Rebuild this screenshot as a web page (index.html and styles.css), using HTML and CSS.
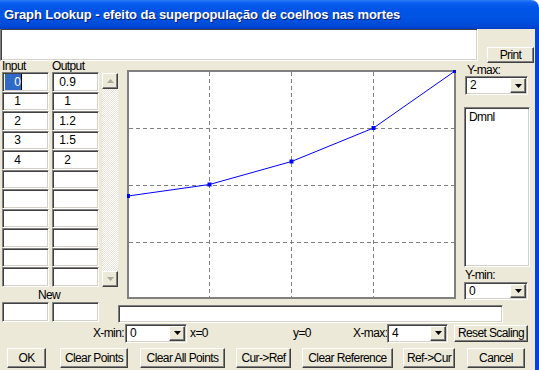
FILE: index.html
```html
<!DOCTYPE html>
<html lang="pt">
<head>
    <meta charset="UTF-8">
    <title>Graph Lookup</title>
    <link rel="stylesheet" href="styles.css">
</head>
<body>
    <div class="window">
        <div class="titlebar">Graph Lookup - efeito da superpopulação de coelhos nas mortes</div>
        <div class="client">
            <div class="top">
                <div class="memo sunken"></div>
                <button class="btn print">Print</button>
            </div>

            <div class="body">
                <div class="table">
                    <div class="heads"><span>Input</span><span>Output</span></div>
                    <div class="cells">
                        <div class="cell sunken in"><span class="sel">0</span></div><div class="cell sunken out">0.9</div>
                        <div class="cell sunken in">1</div><div class="cell sunken out">1</div>
                        <div class="cell sunken in">2</div><div class="cell sunken out">1.2</div>
                        <div class="cell sunken in">3</div><div class="cell sunken out">1.5</div>
                        <div class="cell sunken in">4</div><div class="cell sunken out">2</div>
                        <div class="cell sunken"></div><div class="cell sunken"></div>
                        <div class="cell sunken"></div><div class="cell sunken"></div>
                        <div class="cell sunken"></div><div class="cell sunken"></div>
                        <div class="cell sunken"></div><div class="cell sunken"></div>
                        <div class="cell sunken"></div><div class="cell sunken"></div>
                        <div class="cell sunken"></div><div class="cell sunken"></div>
                    </div>
                    <div class="newlabel">New</div>
                    <div class="cells newrow">
                        <div class="cell sunken"></div><div class="cell sunken"></div>
                    </div>
                </div>

                <div class="right">
                    <div class="mid">
                        <div class="scrollbar">
                            <div class="sbtn raised">
                                <svg width="7" height="4" viewBox="0 0 7 4"><path d="M3.5 0L7 4H0z" fill="#aca899"/></svg>
                            </div>
                            <div class="track"></div>
                            <div class="sbtn raised">
                                <svg width="7" height="4" viewBox="0 0 7 4"><path d="M0 0H7L3.5 4z" fill="#aca899"/></svg>
                            </div>
                        </div>

                        <div class="chart">
                            <svg width="329" height="229" viewBox="0 0 329 229">
                                <rect x="1" y="1" width="327" height="227" fill="#fff" stroke="#808080" stroke-width="2"/>
                                <path d="M82.5 2V227M164.5 2V227M246.5 2V227M2 58.5H327M2 115.5H327M2 172.5H327" stroke="#808080" stroke-dasharray="4 3" fill="none"/>
                                <polyline points="1,126 82.5,114.5 164.5,91.5 246.5,58 328,1" fill="none" stroke="#0000ff"/>
                                <g fill="#0000ff">
                                    <rect x="-1" y="124" width="4" height="4"/>
                                    <rect x="80.5" y="112.5" width="4" height="4"/>
                                    <rect x="162.5" y="89.5" width="4" height="4"/>
                                    <rect x="244.5" y="56" width="4" height="4"/>
                                    <rect x="326" y="-1" width="4" height="4"/>
                                </g>
                            </svg>
                        </div>

                        <div class="side">
                            <div class="lbl">Y-max:</div>
                            <div class="combo ymax sunken">
                                <span>2</span>
                                <span class="drop raised"><svg width="7" height="4" viewBox="0 0 7 4"><path d="M0 0H7L3.5 4z"/></svg></span>
                            </div>
                            <div class="units sunken">Dmnl</div>
                            <div class="lbl lbl-min">Y-min:</div>
                            <div class="combo ymin sunken">
                                <span>0</span>
                                <span class="drop raised"><svg width="7" height="4" viewBox="0 0 7 4"><path d="M0 0H7L3.5 4z"/></svg></span>
                            </div>
                        </div>
                    </div>
                    <div class="status sunken"></div>
                </div>
            </div>

            <div class="xrow">
                <span class="xlabel">X-min:</span>
                <div class="combo xmin sunken">
                    <span>0</span>
                    <span class="drop raised"><svg width="7" height="4" viewBox="0 0 7 4"><path d="M0 0H7L3.5 4z"/></svg></span>
                </div>
                <span class="xval">x=0</span>
                <span class="yval">y=0</span>
                <span class="xmaxlabel">X-max:</span>
                <div class="combo xmax sunken">
                    <span>4</span>
                    <span class="drop raised"><svg width="7" height="4" viewBox="0 0 7 4"><path d="M0 0H7L3.5 4z"/></svg></span>
                </div>
                <button class="btn reset">Reset Scaling</button>
            </div>

            <div class="btnrow">
                <button class="btn b-ok">OK</button>
                <button class="btn b-clear">Clear Points</button>
                <button class="btn b-clearall">Clear All Points</button>
                <button class="btn b-curref">Cur-&gt;Ref</button>
                <button class="btn b-clearref">Clear Reference</button>
                <button class="btn b-refcur">Ref-&gt;Cur</button>
                <button class="btn b-cancel">Cancel</button>
            </div>
        </div>
    </div>
</body>
</html>
```

FILE: styles.css
```css
html,
body {
    margin: 0;
}
body {
    background: #fff;
    color: #000;
    font-family: "Liberation Sans", Arial, sans-serif;
    font-size: 12px;
    letter-spacing: -0.6px;
    white-space: nowrap;
}
.window {
    width: 539px;
    height: 370px;
    display: flex;
    flex-direction: column;
    overflow: hidden;
}
.titlebar {
    flex: none;
    height: 29px;
    box-sizing: border-box;
    padding: 7px 0 0 4px;
    color: #fff;
    font: bold 13px "Liberation Sans", sans-serif;
    letter-spacing: -0.1px;
    text-shadow: 1px 1px #0a1c6a;
    border-top-right-radius: 8px;
    background: linear-gradient(#2b7cf6 0, #0a5ff0 3px, #0055e8 8px, #0054e3 60%, #0049d6 90%, #003cc2 100%);
}
.client {
    flex: 1;
    display: flex;
    flex-direction: column;
    background: #ece9d8;
    border-right: 4px solid #0841d8;
}

/* sunken / raised frames */
.sunken {
    box-sizing: border-box;
    background: #fff;
    border: 1px solid;
    border-color: #808080 #fff #fff #808080;
    box-shadow: inset 1px 1px #404040, inset -1px -1px #d4d0c8;
}
.raised {
    box-sizing: border-box;
    background: #ece9d8;
    border: 1px solid;
    border-color: #fff #404040 #404040 #fff;
    box-shadow: inset -1px -1px #808080;
}
.btn {
    box-sizing: border-box;
    height: 20px;
    padding: 0;
    font: inherit;
    letter-spacing: inherit;
    color: #000;
    background: #ece9d8;
    border: 1px solid;
    border-color: #fff #404040 #404040 #fff;
    box-shadow: inset -1px -1px #808080;
}

.top {
    display: flex;
    height: 32px;
}
.memo {
    width: 478px;
    height: 32px;
    border-top: 0;
}
.print {
    width: 47px;
    height: 16px;
    margin-left: 9px;
    align-self: flex-end;
    margin-bottom: -2px;
    position: relative;
    line-height: 13px;
}

.body {
    display: flex;
    height: 262px;
}

/* left table */
.table {
    width: 100px;
    padding-left: 2px;
    box-sizing: border-box;
}
.heads {
    display: grid;
    grid-template-columns: 47px 47px;
    column-gap: 3px;
    height: 11px;
    line-height: 11px;
}
.cells {
    display: grid;
    grid-template-columns: 47px 47px;
    column-gap: 3px;
    grid-auto-rows: 19.5px;
}
.cell {
    display: flex;
    align-items: center;
    justify-content: center;
    padding-right: 16px;
    letter-spacing: 0;
}
.sel {
    background: #316ac5;
    color: #fff;
    padding: 1px 0 1px 9px;
    margin-left: -8px;
    border-right: 1px solid #000;
}
.newlabel {
    width: 94px;
    height: 15.5px;
    line-height: 17px;
    text-align: center;
}
.newrow {
    grid-auto-rows: 20px;
}

/* graph part */
.right {
    flex: 1;
    display: flex;
    flex-direction: column;
}
.mid {
    display: flex;
    height: 239px;
}
.scrollbar {
    width: 16px;
    height: 214px;
    margin: 12px 0 0 2px;
    display: flex;
    flex-direction: column;
}
.sbtn {
    height: 16px;
    display: flex;
    align-items: center;
    justify-content: center;
}
.track {
    flex: 1;
    background: repeating-conic-gradient(#fff 0 25%, #e6e3d6 0 50%) 0 0 / 2px 2px;
}
.chart {
    width: 329px;
    height: 229px;
    margin: 9px 0 0 9px;
}
.chart svg {
    display: block;
}
.side {
    width: 66px;
    margin-left: 8px;
    padding-top: 4px;
    display: flex;
    flex-direction: column;
}
.lbl {
    height: 11px;
    line-height: 11px;
    padding-left: 3px;
}
.combo {
    display: flex;
    align-items: stretch;
    padding: 1px 1px 1px 4px;
    line-height: 15px;
}
.drop {
    width: 16px;
    margin-left: auto;
    display: flex;
    align-items: center;
    justify-content: center;
}
.ymax {
    width: 63px;
    height: 19px;
    margin-left: 1px;
}
.units {
    margin-top: 12px;
    height: 160px;
    padding: 2px 4px;
    line-height: 14px;
}
.lbl-min {
    margin-top: 3px;
    height: 12px;
    padding-left: 1px;
}
.ymin {
    width: 64px;
    height: 18px;
}
.status {
    width: 385px;
    height: 18px;
    margin: 5px 0 0 18px;
}

/* bottom rows */
.xrow {
    display: flex;
    align-items: center;
    height: 20px;
    padding-left: 90px;
}
.xlabel {
    width: 34px;
    text-align: right;
}
.xmin {
    width: 62px;
    height: 19px;
    margin-left: 1px;
}
.xval {
    width: 103px;
    margin-left: 3px;
}
.yval {
    width: 60px;
}
.xmaxlabel {
    width: 33px;
}
.xmax {
    width: 61px;
    height: 19px;
    margin-left: 1px;
}
.reset {
    width: 74px;
    height: 17px;
    margin-left: 6px;
}
.btnrow {
    display: flex;
    margin-top: 5px;
    padding-left: 7px;
}
.b-ok { width: 39px; }
.b-clear { width: 68px; margin-left: 14px; }
.b-clearall { width: 85px; margin-left: 12px; }
.b-curref { width: 55px; margin-left: 11px; }
.b-clearref { width: 91px; margin-left: 11px; }
.b-refcur { width: 52px; margin-left: 10px; }
.b-cancel { width: 58px; margin-left: 12px; }
```
